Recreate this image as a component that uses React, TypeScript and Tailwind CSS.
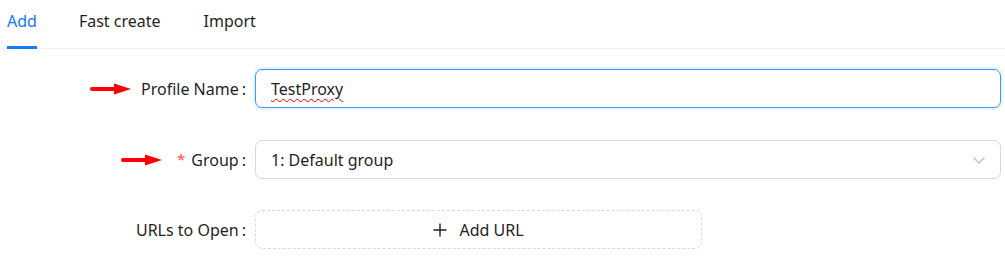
import React from "react";

function Arrow() {
  return (
    <svg width="42" height="14" viewBox="0 0 42 14" className="shrink-0">
      <path d="M2 7 H26" stroke="#ff0000" strokeWidth="4" strokeLinecap="round" />
      <path d="M24 1.5 L41 7 L24 12.5 Z" fill="#ff0000" />
    </svg>
  );
}

export default function App() {
  return (
    <div
      className="w-[1005px] h-[267px] bg-white text-[16px] text-[#1f1f1f] overflow-hidden"
      style={{ fontFamily: '"Noto Sans", "Open Sans", sans-serif' }}
    >
      <div className="flex items-end h-[49px] border-b border-[#f0f0f0] pl-[7px]">
        <div className="relative h-full flex items-center text-[#1677ff] pb-[6px]">
          Add
          <div className="absolute left-0 right-0 bottom-[-1px] h-[3px] bg-[#1677ff]" />
        </div>
        <div className="h-full flex items-center ml-[42px] pb-[6px]">Fast create</div>
        <div className="h-full flex items-center ml-[43px] pb-[6px]">Import</div>
      </div>

      <div className="flex flex-col pt-[20px] pr-[4px]">
        <div className="flex items-center h-[39px]">
          <div className="w-[255px] shrink-0 flex items-center justify-end pr-[9px]">
            <Arrow />
            <span className="ml-[9px]">Profile Name</span>
            <span className="ml-[3px]">:</span>
          </div>
          <div className="flex-1 h-[39px] rounded-[7px] border border-[#4096ff] shadow-[0_0_0_2px_rgba(5,145,255,0.1)] flex items-center px-[15px]">
            <span className="underline decoration-wavy decoration-[#e00000] decoration-1 underline-offset-[3px]">TestProxy</span>
          </div>
        </div>

        <div className="flex items-center h-[39px] mt-[32px]">
          <div className="w-[255px] shrink-0 flex items-center justify-end pr-[9px]">
            <Arrow />
            <span className="ml-[14px] text-[#ff4d4f] text-[15px] mr-[6px]">*</span>
            <span>Group</span>
            <span className="ml-[3px]">:</span>
          </div>
          <div className="flex-1 h-[39px] rounded-[7px] border border-[#d9d9d9] flex items-center pl-[15px] pr-[14px]">
            <span className="flex-1">1: Default group</span>
            <svg width="14" height="14" viewBox="0 0 14 14">
              <path d="M1.5 4.5 L7 10 L12.5 4.5" stroke="#bfbfbf" strokeWidth="1.4" fill="none" />
            </svg>
          </div>
        </div>

        <div className="flex items-center h-[39px] mt-[31px]">
          <div className="w-[255px] shrink-0 flex items-center justify-end pr-[9px]">
            <span>URLs to Open</span>
            <span className="ml-[3px]">:</span>
          </div>
          <div className="w-[447px] h-[39px] rounded-[7px] border border-dashed border-[#d9d9d9] flex items-center justify-center">
            <svg width="14" height="14" viewBox="0 0 14 14" className="mr-[12px]">
              <path d="M7 0.5 V13.5 M0.5 7 H13.5" stroke="#1f1f1f" strokeWidth="1.4" />
            </svg>
            <span>Add URL</span>
          </div>
        </div>
      </div>
    </div>
  );
}
